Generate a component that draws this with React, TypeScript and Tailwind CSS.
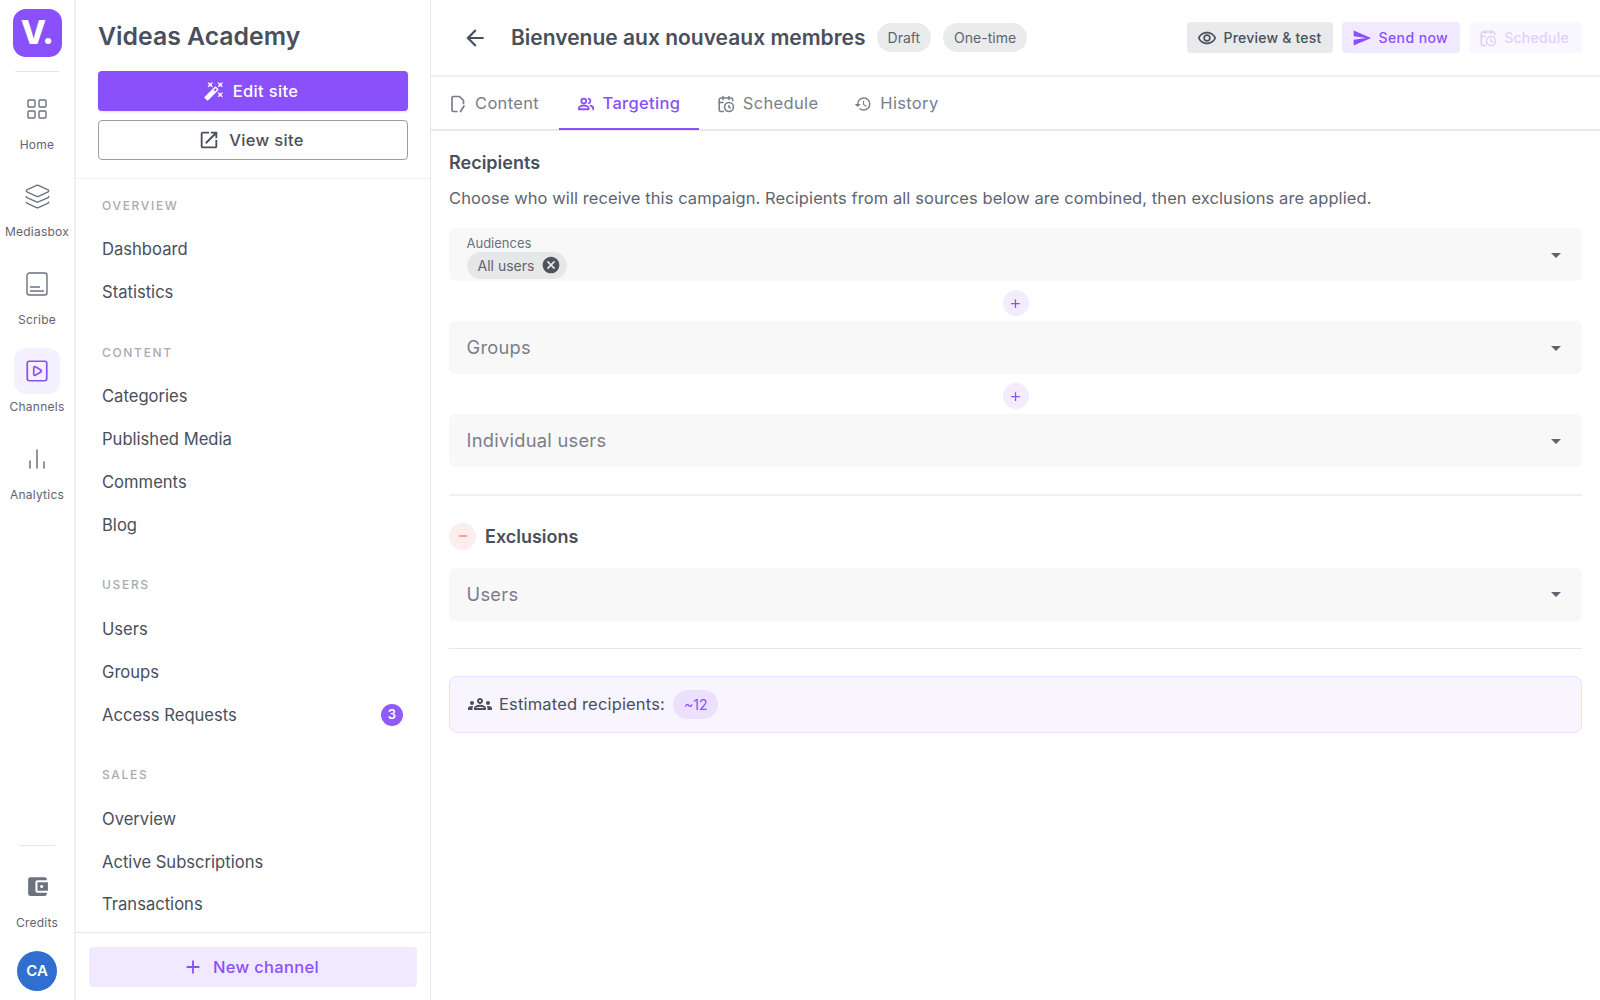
import React from "react";
import { MdOpenInNew, MdHistory, MdOutlineRemoveRedEye, MdSend, MdCancel, MdOutlineGroups, MdArrowDropDown, MdArrowBack, MdAdd, MdRemove, MdAccountBalanceWallet } from "react-icons/md";
import { LayoutGrid, Layers, SquarePlay, CalendarClock } from "lucide-react";

const WandIcon = () => (
  <svg width="20" height="20" viewBox="0 0 24 24" fill="currentColor" stroke="currentColor" strokeWidth="0.9" strokeLinejoin="round">
    <path d="M7.5 5.6 10 7 8.6 4.5 10 2 7.5 3.4 5 2l1.4 2.5L5 7zm12 9.8L17 14l1.4 2.5L17 19l2.5-1.4L22 19l-1.4-2.5L22 14zM22 2l-2.5 1.4L17 2l1.4 2.5L17 7l2.5-1.4L22 7l-1.4-2.5zm-7.63 5.29a.9959.9959 0 0 0-1.41 0L1.29 18.96c-.39.39-.39 1.02 0 1.41l2.34 2.34c.39.39 1.02.39 1.41 0L16.7 11.05c.39-.39.39-1.02 0-1.41l-2.33-2.35zm-1.03 5.49-2.12-2.12 2.44-2.44 2.12 2.12-2.44 2.44z" />
  </svg>
);
const GroupIcon = () => (
  <svg width="18" height="18" viewBox="0 0 24 24" fill="none" stroke="currentColor" strokeWidth="2.4" strokeLinejoin="round" strokeLinecap="round">
    <circle cx="9" cy="8" r="3.2" />
    <path d="M2.5 19v-1.4c0-2.1 3.2-3.6 6.5-3.6s6.5 1.5 6.5 3.6V19z" />
    <path d="M15.5 4.9a3.2 3.2 0 0 1 0 6.2M18 14.2c2.1.5 3.5 1.7 3.5 3.4V19" />
  </svg>
);
const ScribeIcon = () => (
  <svg width="24" height="24" viewBox="0 0 24 24" fill="none" stroke="currentColor" strokeWidth="1.4" strokeLinecap="round">
    <rect x="2" y="1" width="20" height="22" rx="2.5" />
    <path d="M5.5 15h9M5.5 19h13" />
  </svg>
);
const BarsIcon = () => (
  <svg width="24" height="24" viewBox="0 0 24 24" fill="none" stroke="currentColor" strokeWidth="1.5" strokeLinecap="round">
    <path d="M5 14v7M12 3v18M19 15v6" />
  </svg>
);
const FileEditIcon = () => (
  <svg width="18" height="18" viewBox="0 0 18 18" fill="none" stroke="currentColor" strokeWidth="1.7" strokeLinecap="round" strokeLinejoin="round">
    <path d="M8 16.5H4.2A1.2 1.2 0 0 1 3 15.3V2.7a1.2 1.2 0 0 1 1.2-1.2h6.3l4 4v3" />
    <path d="M15 11l-3.5 5.5" />
  </svg>
);

const RailItem = ({ icon, label, active }: { icon: React.ReactNode; label: string; active?: boolean }) => (
  <div className="h-[87.4px] flex flex-col items-center">
    <div className={`w-[46px] h-[46px] rounded-xl flex items-center justify-center ${active ? "bg-[#f6f1ff] text-[#8950fc]" : "text-[#6b7280]"}`}>{icon}</div>
    <div className="mt-[4px] text-[12px] leading-[18px] tracking-[0.02em] text-[#5f6470] whitespace-nowrap">{label}</div>
  </div>
);

const NavSection = ({ title, items }: { title: string; items: [string, number?][] }) => (
  <div className="mb-[27.4px]">
    <div className="h-[23px] mb-[11px] pl-[26px] flex items-center text-[12px] font-medium tracking-[0.14em] text-[#a8abb2]">{title}</div>
    {items.map(([label, badge]) => (
      <div key={label} className="h-[42.85px] pl-[26px] pr-[27px] flex items-center justify-between text-[16.6px] text-[#4a4f5c]">
        <span>{label}</span>
        {badge ? <span className="w-[22px] h-[22px] rounded-full bg-[#8f5cfa] text-white text-[13px] font-semibold flex items-center justify-center">{badge}</span> : null}
      </div>
    ))}
  </div>
);

const Tab = ({ icon, label, active, extra = "pr-[18px]" }: { icon: React.ReactNode; label: string; active?: boolean; extra?: string }) => (
  <div className={`h-[53px] pl-[18px] ${extra} pt-[2px] flex items-center gap-[8px] text-[16.5px] tracking-[0.02em] border-b-[2px] ${active ? "border-[#8950fc] text-[#8950fc] font-medium" : "border-transparent text-[#7a7e89]"}`}>
    {icon}
    <span>{label}</span>
  </div>
);

const SelectBox = ({ label }: { label: string }) => (
  <div className="h-[53px] rounded-[6px] bg-[#f8f8f8] pl-[17.5px] pr-[14px] flex items-center justify-between">
    <span className="text-[18.3px] tracking-[0.015em] text-[#7a7e89]">{label}</span>
    <MdArrowDropDown size={24} className="text-[#5f6470]" />
  </div>
);

const PlusCircle = ({ height }: { height: string }) => (
  <div className={`${height} pt-[4px] flex items-center justify-center`}>
    <div className="w-[26px] h-[26px] rounded-full bg-[#f3ecff] text-[#8950fc] flex items-center justify-center"><MdAdd size={15} /></div>
  </div>
);

export default function App() {
  return (
    <div className="h-screen w-full flex overflow-hidden bg-white text-[#4a4f5c]" style={{ fontFamily: "Inter, 'Liberation Sans', sans-serif" }}>
      {/* Rail */}
      <aside className="w-[76px] shrink-0 border-r-2 border-[#f0f0f1] flex flex-col items-center justify-between">
        <div className="flex flex-col items-center pt-[9px]">
          <div className="w-[49px] h-[48px] rounded-[13px] bg-[#8950fc] text-white flex items-center justify-center text-[33px] font-extrabold tracking-[-0.02em]">V.</div>
          <div className="w-[44px] h-px bg-[#e6e6e8] mt-[14px] mb-[14px]" />
          <RailItem icon={<LayoutGrid size={24} strokeWidth={1.4} />} label="Home" />
          <RailItem icon={<Layers size={27} strokeWidth={1.2} />} label="Mediasbox" />
          <RailItem icon={<ScribeIcon />} label="Scribe" />
          <RailItem active icon={<SquarePlay size={26} strokeWidth={1.6} />} label="Channels" />
          <RailItem icon={<BarsIcon />} label="Analytics" />
        </div>
        <div className="flex flex-col items-center pb-[9px]">
          <div className="w-[36px] h-px bg-[#e6e6e8] mb-[18px]" />
          <RailItem icon={<MdAccountBalanceWallet size={25} />} label="Credits" />
          <div className="w-[40px] h-[40px] rounded-full bg-[#2f6fd0] text-white text-[15px] font-semibold flex items-center justify-center">CA</div>
        </div>
      </aside>

      {/* Sidebar */}
      <aside className="w-[355px] shrink-0 border-r border-[#e8e8ea] flex flex-col h-full">
        <div className="h-[179px] shrink-0 border-b border-[#efeff0] px-[22px] pt-[16px]">
          <div className="text-[24.8px] leading-[40px] font-semibold text-[#4a4f5c] whitespace-nowrap">Videas Academy</div>
          <div className="mt-[15px] h-[40px] rounded-[4px] bg-[#8950fc] text-white shadow-sm pr-[4px] flex items-center justify-center gap-[9px] text-[16.5px] font-medium tracking-[0.02em]">
            <WandIcon />
            <span>Edit site</span>
          </div>
          <div className="mt-[9px] h-[40px] rounded-[4px] border border-[#9a9da5] text-[#4a4f5c] pr-[4px] flex items-center justify-center gap-[9px] text-[16.5px] font-medium tracking-[0.02em]">
            <MdOpenInNew size={22} />
            <span>View site</span>
          </div>
        </div>
        <div className="flex-1 overflow-hidden pt-[15px]">
          <NavSection title="OVERVIEW" items={[["Dashboard"], ["Statistics"]]} />
          <NavSection title="CONTENT" items={[["Categories"], ["Published Media"], ["Comments"], ["Blog"]]} />
          <NavSection title="USERS" items={[["Users"], ["Groups"], ["Access Requests", 3]]} />
          <NavSection title="SALES" items={[["Overview"], ["Active Subscriptions"], ["Transactions"]]} />
        </div>
        <div className="h-[68px] shrink-0 border-t border-[#e8e8ea] px-[13px] pt-[14px]">
          <div className="h-[40px] rounded-[4px] bg-[#f1e9ff] text-[#8950fc] pr-[5px] flex items-center justify-center gap-[9px] text-[16.5px] font-medium tracking-[0.02em]">
            <MdAdd size={22} />
            <span>New channel</span>
          </div>
        </div>
      </aside>

      {/* Main */}
      <main className="flex-1 min-w-0 flex flex-col">
        <header className="h-[77px] shrink-0 border-b-2 border-[#f0f0f1] pl-[31px] pr-[18px] flex items-center">
          <MdArrowBack size={26} className="text-[#4a4f5c]" />
          <h1 className="ml-[23px] text-[21px] font-semibold text-[#4a4f5c] whitespace-nowrap">Bienvenue aux nouveaux membres</h1>
          <span className="ml-[11px] h-[29px] px-[11px] rounded-full bg-[#eaebec] text-[14px] flex items-center text-[#5f6470]">Draft</span>
          <span className="ml-[12px] h-[29px] px-[11px] rounded-full bg-[#eaebec] text-[14px] flex items-center text-[#5f6470]">One-time</span>
          <div className="ml-auto flex items-center gap-[9px]">
            <div className="h-[31px] pl-[10px] pr-[12px] rounded-[4px] bg-[#e9eaec] flex items-center gap-[6px] text-[14px] font-medium tracking-[0.015em] text-[#4a4f5c]"><MdOutlineRemoveRedEye size={20} /><span>Preview &amp; test</span></div>
            <div className="h-[31px] pl-[10px] pr-[12px] rounded-[4px] bg-[#f1e9ff] flex items-center gap-[6px] text-[14px] font-medium tracking-[0.03em] text-[#8950fc]"><MdSend size={20} /><span>Send now</span></div>
            <div className="h-[31px] pl-[10px] pr-[13px] rounded-[4px] bg-[#faf7ff] flex items-center gap-[7px] text-[14px] font-medium tracking-[0.02em] text-[#e0d0ff]"><CalendarClock size={18} strokeWidth={2.2} /><span>Schedule</span></div>
          </div>
        </header>
        <nav className="h-[54px] shrink-0 border-b-2 border-[#e8e8ea] flex">
          <Tab extra="pr-[19.5px]" icon={<FileEditIcon />} label="Content" />
          <Tab active extra="pr-[18.5px]" icon={<GroupIcon />} label="Targeting" />
          <Tab icon={<CalendarClock size={18} strokeWidth={2.1} />} label="Schedule" />
          <Tab icon={<MdHistory size={18} />} label="History" />
        </nav>
        <div className="px-[18px] pt-[19px]">
          <h2 className="text-[18px] leading-[26px] font-semibold">Recipients</h2>
          <p className="mt-[8.5px] text-[16.5px] leading-[26px] tracking-[0.005em] text-[#5f6470]">Choose who will receive this campaign. Recipients from all sources below are combined, then exclusions are applied.</p>
          <div className="mt-[17.5px] h-[53px] rounded-[6px] bg-[#f8f8f8] pl-[17.5px] pr-[14px] flex items-center justify-between">
            <div className="pt-[4px]">
              <div className="text-[13px] leading-[16px] text-[#6b6f7a] mb-[1px]">Audiences</div>
              <div className="inline-flex items-center h-[27px] rounded-full bg-[#e6e7e9] pl-[11px] pr-[6px] gap-[7px] text-[14px] text-[#5f6470]">
                <span>All users</span>
                <MdCancel size={20} className="text-[#4f535e]" />
              </div>
            </div>
            <MdArrowDropDown size={24} className="text-[#5f6470]" />
          </div>
          <PlusCircle height="h-[40px]" />
          <SelectBox label="Groups" />
          <PlusCircle height="h-[40.4px]" />
          <SelectBox label="Individual users" />
          <div className="mt-[26.6px] h-[2px] bg-[#f0f0f1]" />
          <div className="mt-[27px] flex items-center gap-[9px]">
            <div className="w-[27px] h-[27px] rounded-full bg-[#fdeeee] text-[#f87171] flex items-center justify-center"><MdRemove size={14} /></div>
            <span className="text-[18px] font-semibold">Exclusions</span>
          </div>
          <div className="mt-[18px]"><SelectBox label="Users" /></div>
          <div className="mt-[27px] h-px bg-[#e8e8ea]" />
          <div className="mt-[27px] h-[57px] rounded-[8px] border border-[#e9deff] bg-[#f8f5ff] pl-[18px] flex items-center gap-[7px]">
            <MdOutlineGroups size={24} className="text-[#4a4f5c]" />
            <span className="text-[16.5px] tracking-[0.01em]">Estimated recipients:</span>
            <span className="ml-[1px] h-[29px] px-[11px] rounded-full bg-[#ebe1ff] text-[#8950fc] text-[14px] flex items-center">~12</span>
          </div>
        </div>
      </main>
    </div>
  );
}
